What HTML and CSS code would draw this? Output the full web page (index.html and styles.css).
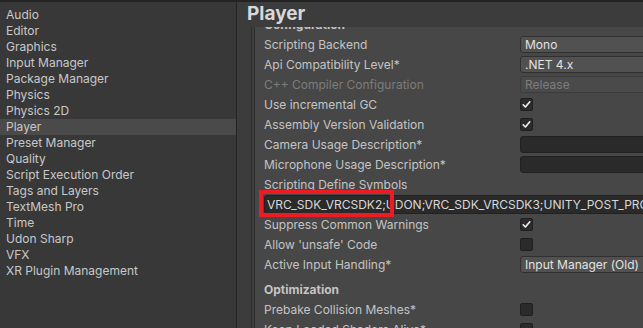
FILE: index.html
```html
<!DOCTYPE html>
<html>
<head>
<meta charset="utf-8">
<link rel="stylesheet" href="styles.css">
</head>
<body>
<div class="window">
  <nav class="sidebar">
    <div class="nav-item">Audio</div>
    <div class="nav-item">Editor</div>
    <div class="nav-item">Graphics</div>
    <div class="nav-item">Input Manager</div>
    <div class="nav-item">Package Manager</div>
    <div class="nav-item">Physics</div>
    <div class="nav-item">Physics 2D</div>
    <div class="nav-item selected">Player</div>
    <div class="nav-item">Preset Manager</div>
    <div class="nav-item">Quality</div>
    <div class="nav-item">Script Execution Order</div>
    <div class="nav-item">Tags and Layers</div>
    <div class="nav-item">TextMesh Pro</div>
    <div class="nav-item">Time</div>
    <div class="nav-item">Udon Sharp</div>
    <div class="nav-item">VFX</div>
    <div class="nav-item">XR Plugin Management</div>
  </nav>
  <main class="main">
    <header class="title-bar">Player</header>
    <div class="content">
      <div class="gutter"></div>
      <div class="rail"></div>
      <div class="props">
        <div class="row section first">Configuration</div>
        <div class="row"><span class="label">Scripting Backend</span><span class="dropdown">Mono</span></div>
        <div class="row"><span class="label">Api Compatibility Level*</span><span class="dropdown">.NET 4.x</span></div>
        <div class="row disabled"><span class="label">C++ Compiler Configuration</span><span class="dropdown off">Release</span></div>
        <div class="row"><span class="label">Use incremental GC</span><span class="checkbox on"><svg viewBox="0 0 13 13" width="13" height="13"><path d="M3.2 6.8 L5.4 9 L9.8 3.8" fill="none" stroke="#f0f0f0" stroke-width="1.6" stroke-linecap="round" stroke-linejoin="round"/></svg></span></div>
        <div class="row"><span class="label">Assembly Version Validation</span><span class="checkbox on"><svg viewBox="0 0 13 13" width="13" height="13"><path d="M3.2 6.8 L5.4 9 L9.8 3.8" fill="none" stroke="#f0f0f0" stroke-width="1.6" stroke-linecap="round" stroke-linejoin="round"/></svg></span></div>
        <div class="row"><span class="label">Camera Usage Description*</span><span class="textbox"></span></div>
        <div class="row"><span class="label">Microphone Usage Description*</span><span class="textbox"></span></div>
        <div class="row"><span class="label">Scripting Define Symbols</span></div>
        <div class="row field-row"><div class="wide-field">VRC_SDK_VRCSDK2;UDON;VRC_SDK_VRCSDK3;UNITY_POST_PROCESSING_STACK_V2</div><div class="highlight"></div></div>
        <div class="row"><span class="label">Suppress Common Warnings</span><span class="checkbox on"><svg viewBox="0 0 13 13" width="13" height="13"><path d="M3.2 6.8 L5.4 9 L9.8 3.8" fill="none" stroke="#f0f0f0" stroke-width="1.6" stroke-linecap="round" stroke-linejoin="round"/></svg></span></div>
        <div class="row"><span class="label">Allow 'unsafe' Code</span><span class="checkbox"></span></div>
        <div class="row"><span class="label">Active Input Handling*</span><span class="dropdown">Input Manager (Old)</span></div>
        <div class="row section">Optimization</div>
        <div class="row"><span class="label">Prebake Collision Meshes*</span><span class="checkbox"></span></div>
        <div class="row"><span class="label">Keep Loaded Shaders Alive*</span><span class="checkbox"></span></div>
      </div>
    </div>
  </main>
</div>
</body>
</html>
```

FILE: styles.css
```css
* { box-sizing: border-box; }
html, body {
  margin: 0;
  padding: 0;
  width: 643px;
  height: 328px;
  overflow: hidden;
  background: #232323;
  font-family: Inter, "Noto Sans", sans-serif;
  font-size: 12px;
}
.window {
  display: flex;
  margin-top: 2px;
  height: 326px;
}
.sidebar {
  width: 237px;
  flex: none;
  background: #383838;
  border-right: 1px solid #232323;
  padding-top: 5px;
}
.nav-item {
  height: 16px;
  line-height: 16px;
  padding-left: 6px;
  color: #c8c8c8;
  white-space: nowrap;
}
.nav-item.selected {
  background: #4a4a4a;
}
.main {
  flex: 1;
  display: flex;
  flex-direction: column;
  overflow: hidden;
  min-width: 0;
}
.title-bar {
  height: 25px;
  flex: none;
  background: #3c3c3c;
  color: #d8d8d8;
  font-size: 19px;
  font-weight: 700;
  line-height: 24px;
  padding-left: 10px;
  position: relative;
  z-index: 1;
}
.content {
  flex: 1;
  display: flex;
  background: #474747;
  overflow: hidden;
}
.gutter {
  width: 14px;
  flex: none;
  background: #3c3c3c;
}
.rail {
  width: 4px;
  flex: none;
  border-left: 1px solid #2c2c2c;
  border-right: 1px solid #2c2c2c;
  background: #3f3f3f;
}
.props {
  flex: 1;
  padding-left: 9px;
  min-width: 0;
}
.row {
  height: 20px;
  display: flex;
  align-items: center;
  color: #c4c4c4;
  white-space: nowrap;
  position: relative;
}
.row.first { margin-top: -13px; }
.section {
  font-weight: 700;
}
.row.section:not(.first) {
  margin-top: 5px;
}
.label {
  width: 256px;
  flex: none;
}
.disabled .label { color: #7c7c7c; }
.dropdown {
  width: 140px;
  height: 17px;
  line-height: 15px;
  background: #515151;
  border: 1px solid #303030;
  border-radius: 3px;
  padding-left: 4px;
  color: #e2e2e2;
  flex: none;
}
.dropdown.off {
  background: #4a4a4a;
  border-color: #3c3c3c;
  color: #7c7c7c;
}
.textbox {
  width: 140px;
  height: 17px;
  background: #2a2a2a;
  border: 1px solid #212121;
  border-radius: 3px;
  flex: none;
}
.checkbox {
  width: 13px;
  height: 13px;
  background: #2b2b2b;
  border: 1px solid #1f1f1f;
  border-radius: 2px;
  flex: none;
  display: flex;
  align-items: center;
  justify-content: center;
}
.checkbox svg { display: block; margin: -1px; }
.field-row { overflow: visible; }
.wide-field {
  width: 420px;
  height: 19px;
  line-height: 17px;
  background: #2a2a2a;
  border: 1px solid #212121;
  border-radius: 3px;
  padding-left: 2px;
  color: #d8d8d8;
  flex: none;
  overflow: hidden;
}
.highlight {
  position: absolute;
  left: -5px;
  top: -4px;
  width: 135px;
  height: 27px;
  border: 4px solid #ec1c24;
}
```
